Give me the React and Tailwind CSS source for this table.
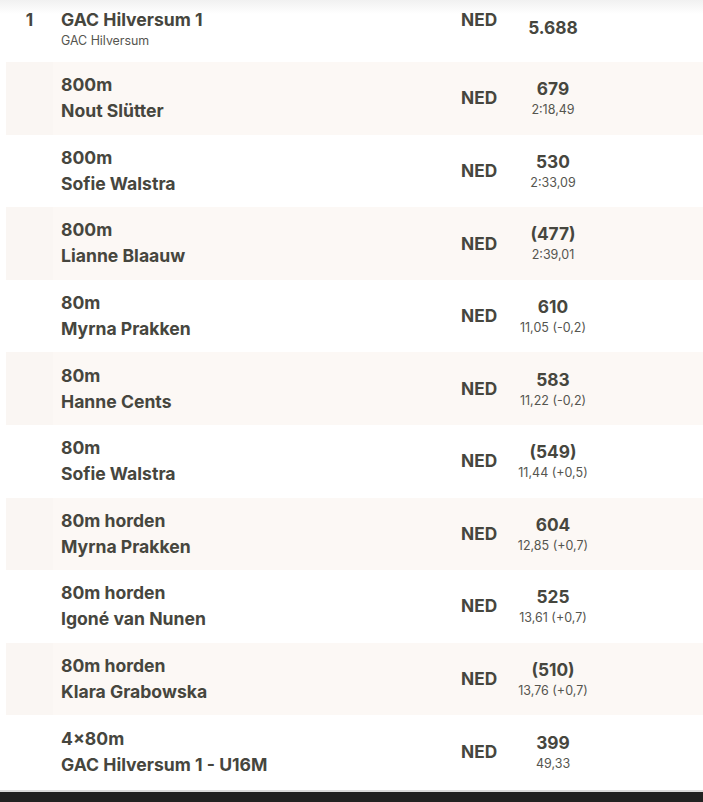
import React from "react";

const rows = [
    { event: "800m", name: "Nout Slütter", pts: "679", perf: "2:18,49" },
    { event: "800m", name: "Sofie Walstra", pts: "530", perf: "2:33,09" },
    { event: "800m", name: "Lianne Blaauw", pts: "(477)", perf: "2:39,01" },
    { event: "80m", name: "Myrna Prakken", pts: "610", perf: "11,05 (-0,2)" },
    { event: "80m", name: "Hanne Cents", pts: "583", perf: "11,22 (-0,2)" },
    { event: "80m", name: "Sofie Walstra", pts: "(549)", perf: "11,44 (+0,5)" },
    { event: "80m horden", name: "Myrna Prakken", pts: "604", perf: "12,85 (+0,7)" },
    { event: "80m horden", name: "Igoné van Nunen", pts: "525", perf: "13,61 (+0,7)" },
    { event: "80m horden", name: "Klara Grabowska", pts: "(510)", perf: "13,76 (+0,7)" },
    { event: "4×80m", name: "GAC Hilversum 1 - U16M", pts: "399", perf: "49,33" },
];

function Row({ r, shaded }) {
    return (
        <div className={"ml-[6px] flex h-[72.6px] items-center " + (shaded ? "bg-[#fcf8f5]" : "bg-white")}>
            <div className={"h-full w-[47px] " + (shaded ? "bg-[#faf6f3]" : "")}></div>
            <div className="flex-1 pl-[8px]">
                <div className="text-[17.6px] font-bold leading-[26px]">{r.event}</div>
                <div className="text-[17.6px] font-bold leading-[26px]">{r.name}</div>
            </div>
            <div className="w-[49px] text-[17.3px] font-bold">NED</div>
            <div className="flex w-[86px] flex-col items-center">
                <div className="text-[17.3px] font-bold leading-[24px]">{r.pts}</div>
                <div className="text-[12.5px] leading-[18px] text-[#55554f]">{r.perf}</div>
            </div>
            <div className="w-[107px]"></div>
        </div>
    );
}

export default function App() {
    return (
        <div className="h-[802px] overflow-hidden bg-white text-[#46463e] font-['Inter',sans-serif]">
            <div className="flex h-[62px] items-start bg-[linear-gradient(to_bottom,#f1f1f1,#ffffff_14px)] pt-[7px]">
                <div className="ml-[6px] w-[47px] text-center text-[17.3px] font-bold leading-[26px]">1</div>
                <div className="flex-1 pl-[8px]">
                    <div className="text-[17.6px] font-bold leading-[26px]">GAC Hilversum 1</div>
                    <div className="text-[12.4px] leading-[16px] text-[#55554f]">GAC Hilversum</div>
                </div>
                <div className="w-[49px] text-[17.3px] font-bold leading-[26px]">NED</div>
                <div className="w-[86px] pt-[8px] text-center text-[17.3px] font-bold leading-[26px]">5.688</div>
                <div className="w-[107px]"></div>
            </div>
            {rows.map((r, i) => (
                <Row key={i} r={r} shaded={i % 2 === 0} />
            ))}
            <div className="h-[2px] bg-white"></div>
            <div className="h-[2px] bg-[#dcdcdc]"></div>
            <div className="h-[12px] bg-[#222222]"></div>
        </div>
    );
}
